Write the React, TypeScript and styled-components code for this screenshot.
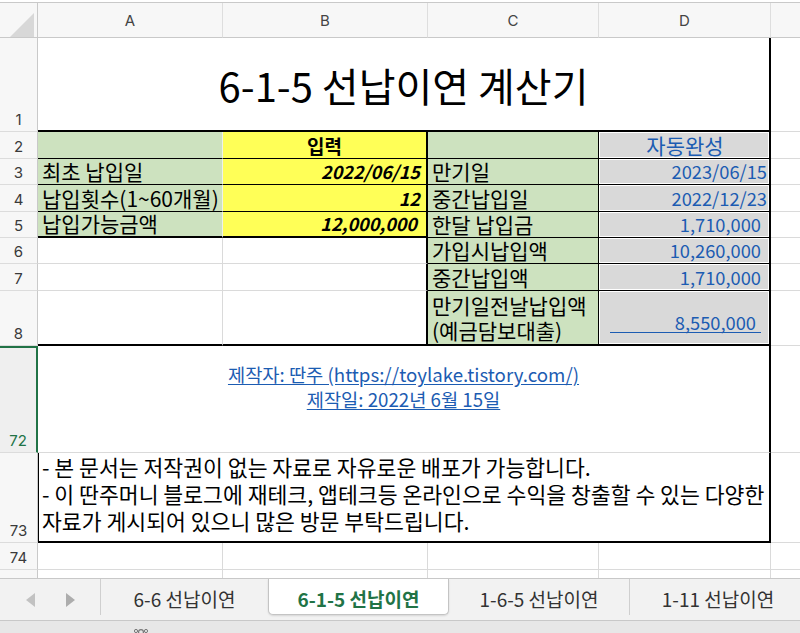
import React from "react";
import styled, { createGlobalStyle } from "styled-components";

const GRID = "#dadada";
const HEAD_LINE = "#c9c9c9";
const THIN = "1px solid #000";
const THICK = "2px solid #000";
const GREEN = "#cde2bf";
const YELLOW = "#ffff57";
const GRAY = "#d9d9d9";
const BLUE = "#1c5cb2";
const XL_GREEN = "#217346";
const KR = `"Noto Sans CJK KR", "Noto Sans", sans-serif`;
const UI = `Inter, "Noto Sans", sans-serif`;

const GlobalStyle = createGlobalStyle`
  html, body {
    margin: 0;
    padding: 0;
    background: #fff;
  }
  body {
    font-family: ${KR};
    overflow: hidden;
  }
  * {
    box-sizing: border-box;
  }
`;

const Window = styled.div`
  width: 800px;
  height: 633px;
  display: flex;
  flex-direction: column;
  overflow: hidden;
`;

const SheetArea = styled.div`
  height: 578px;
  flex: none;
  overflow: hidden;
  padding-top: 2px;
  background: #fff;
`;

const Sheet = styled.div`
  display: grid;
  grid-template-columns: 38px 185px 205px 171px 172px 29px;
  grid-template-rows: 35px 94px 27px 26px 27px 26px 26px 27px 55px 107px 90px 27px 27px;
  border-top: 1px solid ${HEAD_LINE};
`;

const Corner = styled.div`
  position: relative;
  background: #f7f7f7;
  border-right: 1px solid ${HEAD_LINE};
  border-bottom: 1px solid ${HEAD_LINE};

  &::after {
    content: "";
    position: absolute;
    left: 10px;
    top: 10px;
    width: 24px;
    height: 24px;
    background: #d8d8d8;
    clip-path: polygon(100% 0, 100% 100%, 0 100%);
  }
`;

const ColHead = styled.div<{ $last?: boolean }>`
  background: #f7f7f7;
  border-right: ${({ $last }) => ($last ? "none" : "1px solid #dedede")};
  border-bottom: 1px solid ${HEAD_LINE};
  display: flex;
  align-items: center;
  justify-content: center;
  font-family: ${UI};
  font-size: 15px;
  color: #444;
`;

const RowHead = styled.div<{ $active?: boolean }>`
  background: ${({ $active }) => ($active ? "#efefef" : "#f7f7f7")};
  border-right: ${({ $active }) => ($active ? `2px solid ${XL_GREEN}` : `1px solid ${HEAD_LINE}`)};
  border-bottom: 1px solid #dcdcdc;
  box-shadow: ${({ $active }) => ($active ? `inset 0 2px 0 ${XL_GREEN}` : "none")};
  display: flex;
  align-items: flex-end;
  justify-content: center;
  padding-bottom: 4px;
  font-family: ${UI};
  font-size: 15px;
  line-height: 1;
  overflow: hidden;
  color: ${({ $active }) => ($active ? XL_GREEN : "#3a3a3a")};
`;

type CellProps = {
  $bg?: string;
  $r?: string;
  $b?: string;
  $l?: string;
  $span?: number;
  $align?: "flex-start" | "center" | "flex-end";
  $valign?: "flex-start" | "center" | "flex-end";
  $inset?: boolean;
};

const Cell = styled.div<CellProps>`
  grid-column: span ${({ $span }) => $span ?? 1};
  background: ${({ $bg }) => $bg ?? "#fff"};
  border-right: ${({ $r }) => $r ?? `1px solid ${GRID}`};
  border-bottom: ${({ $b }) => $b ?? `1px solid ${GRID}`};
  border-left: ${({ $l }) => $l ?? "none"};
  box-shadow: ${({ $inset }) => ($inset ? "inset 0 0 0 1px #fff" : "none")};
  display: flex;
  align-items: ${({ $valign }) => $valign ?? "flex-end"};
  justify-content: ${({ $align }) => $align ?? "flex-start"};
  padding: 0 4px 1px;
  font-size: 21px;
  line-height: 23px;
  color: #000;
  white-space: nowrap;
`;

const Title = styled(Cell)`
  font-size: 40px;
  line-height: 1.2;
  padding: 2px 0 0;
`;

const InputHead = styled.span`
  font-size: 19px;
  font-weight: 700;
`;

const InputValue = styled.span<{ $pr: number }>`
  font-size: 18px;
  font-weight: 700;
  font-style: italic;
  margin-right: ${({ $pr }) => $pr}px;
`;

const AutoValue = styled.span<{ $pr?: number; $num?: boolean }>`
  color: ${BLUE};
  font-size: ${({ $num }) => ($num ? "18.3px" : "inherit")};
  margin-right: ${({ $pr }) => $pr ?? 0}px;
`;

const Underlined = styled.span`
  flex: 1;
  text-align: right;
  color: ${BLUE};
  font-size: 18.3px;
  line-height: 20px;
  padding-right: 5px;
  margin: 10px 0 0 7px;
  border-bottom: 1px solid ${BLUE};
`;

const TwoLines = styled.div`
  line-height: 25px;
`;

const Credits = styled(Cell)`
  flex-direction: column;
  padding-top: 15px;
`;

const CreditLink = styled.a`
  color: ${BLUE};
  font-size: 18.7px;
  line-height: 25px;
  text-decoration: underline;
  text-underline-offset: 2px;
`;

const Notice = styled(Cell)`
  flex-direction: column;
  align-items: flex-start;
  justify-content: flex-start;
  padding: 0 0 0 3px;
  font-size: 21.6px;
  line-height: 27px;
`;

const TabBar = styled.div`
  height: 42px;
  flex: none;
  display: flex;
  background: #f2f2f2;
  border-top: 1px solid #c8c8c8;
  overflow: hidden;
`;

const TabNav = styled.div`
  width: 101px;
  flex: none;
  display: flex;
  align-items: center;
  padding-left: 24px;
  gap: 27px;
  border-right: 1px solid #cfcfcf;
  margin-bottom: 5px;
`;

const Arrow = styled.svg<{ $light?: boolean }>`
  width: 13px;
  height: 16px;
  fill: ${({ $light }) => ($light ? "#c2c2c2" : "#adadad")};
  margin-top: 5px;
`;

const Tab = styled.div<{ $w: number; $active?: boolean; $sep?: boolean }>`
  width: ${({ $w }) => $w}px;
  flex: none;
  display: flex;
  align-items: center;
  justify-content: center;
  padding-top: 3px;
  margin-bottom: 5px;
  font-size: 19px;
  white-space: nowrap;
  color: ${({ $active }) => ($active ? XL_GREEN : "#333")};
  font-weight: ${({ $active }) => ($active ? 700 : 400)};
  background: ${({ $active }) => ($active ? "#fff" : "transparent")};
  border: ${({ $active }) => ($active ? "1px solid #c4c4c4" : "none")};
  border-top: none;
  border-right: ${({ $active, $sep }) =>
    $active ? "1px solid #c4c4c4" : $sep ? "1px solid #cfcfcf" : "none"};
  border-radius: ${({ $active }) => ($active ? "0 0 5px 5px" : "0")};
  box-shadow: ${({ $active }) => ($active ? "0 1px 2px rgba(0,0,0,0.12)" : "none")};
`;

const StatusBar = styled.div`
  flex: 1;
  background: #e7e7e7;
  border-top: 1px solid #c8c8c8;
  padding-left: 132px;
  overflow: hidden;
`;

const StatusIcon = styled.svg`
  width: 18px;
  height: 12px;
  margin-top: 6px;
  display: block;
`;

type Row = {
  n: number;
  a?: string;
  b?: React.ReactNode;
  c?: React.ReactNode;
  d?: React.ReactNode;
};

const rows: Row[] = [
  { n: 2, b: <InputHead>입력</InputHead>, d: <AutoValue>자동완성</AutoValue> },
  {
    n: 3,
    a: "최초 납입일",
    b: <InputValue $pr={2}>2022/06/15</InputValue>,
    c: "만기일",
    d: <AutoValue $num>2023/06/15</AutoValue>,
  },
  {
    n: 4,
    a: "납입횟수(1~60개월)",
    b: <InputValue $pr={2}>12</InputValue>,
    c: "중간납입일",
    d: <AutoValue $num>2022/12/23</AutoValue>,
  },
  {
    n: 5,
    a: "납입가능금액",
    b: <InputValue $pr={5}>12,000,000</InputValue>,
    c: "한달 납입금",
    d: (
      <AutoValue $num $pr={6}>
        1,710,000
      </AutoValue>
    ),
  },
  {
    n: 6,
    c: "가입시납입액",
    d: (
      <AutoValue $num $pr={6}>
        10,260,000
      </AutoValue>
    ),
  },
  {
    n: 7,
    c: "중간납입액",
    d: (
      <AutoValue $num $pr={6}>
        1,710,000
      </AutoValue>
    ),
  },
  {
    n: 8,
    c: (
      <TwoLines>
        만기일전날납입액
        <br />
        (예금담보대출)
      </TwoLines>
    ),
    d: <Underlined>8,550,000</Underlined>,
  },
];

const lowerBorder = (n: number) => (n <= 4 ? THIN : n === 5 || n === 8 ? THICK : undefined);

const App = () => {
  return (
    <Window>
      <GlobalStyle />
      <SheetArea>
        <Sheet>
          <Corner />
          <ColHead>A</ColHead>
          <ColHead>B</ColHead>
          <ColHead>C</ColHead>
          <ColHead>D</ColHead>
          <ColHead $last />

          <RowHead>1</RowHead>
          <Title $span={4} $r={THICK} $b={THICK} $align="center" $valign="center">
            6-1-5 선납이연 계산기
          </Title>
          <Cell $r="none" />

          {rows.map((row) => (
            <React.Fragment key={row.n}>
              <RowHead>{row.n}</RowHead>
              <Cell
                $bg={row.n <= 5 ? GREEN : undefined}
                $r={row.n <= 5 ? "1px solid #eef2ea" : undefined}
                $b={lowerBorder(row.n)}
              >
                {row.a}
              </Cell>
              <Cell
                $bg={row.n <= 5 ? YELLOW : undefined}
                $r={THICK}
                $b={lowerBorder(row.n)}
                $align={row.n === 2 ? "center" : "flex-end"}
              >
                {row.b}
              </Cell>
              <Cell $bg={GREEN} $r={THIN} $b={row.n === 8 ? THICK : THIN}>
                {row.c}
              </Cell>
              <Cell
                $bg={GRAY}
                $r={THICK}
                $b={row.n === 8 ? THICK : THIN}
                $inset
                $align={row.n === 2 ? "center" : "flex-end"}
                $valign={row.n === 8 ? "center" : "flex-end"}
                style={{ paddingRight: row.n === 8 ? 8 : 2 }}
              >
                {row.d}
              </Cell>
              <Cell $r="none" />
            </React.Fragment>
          ))}

          <RowHead $active>72</RowHead>
          <Credits $span={4} $r={THICK} $align="flex-start" $valign="center">
            <CreditLink href="#">제작자: 딴주 (https://toylake.tistory.com/)</CreditLink>
            <CreditLink href="#">제작일: 2022년 6월 15일</CreditLink>
          </Credits>
          <Cell $r="none" />

          <RowHead>73</RowHead>
          <Notice $span={4} $l={THIN} $r={THICK} $b={THICK}>
            <span>- 본 문서는 저작권이 없는 자료로 자유로운 배포가 가능합니다.</span>
            <span>- 이 딴주머니 블로그에 재테크, 앱테크등 온라인으로 수익을 창출할 수 있는 다양한</span>
            <span>자료가 게시되어 있으니 많은 방문 부탁드립니다.</span>
          </Notice>
          <Cell $r="none" />

          {[74, 75].map((n) => (
            <React.Fragment key={n}>
              <RowHead>{n}</RowHead>
              <Cell />
              <Cell />
              <Cell />
              <Cell />
              <Cell $r="none" />
            </React.Fragment>
          ))}
        </Sheet>
      </SheetArea>

      <TabBar>
        <TabNav>
          <Arrow $light viewBox="0 0 13 16">
            <path d="M11 1 L2 8 L11 15 Z" />
          </Arrow>
          <Arrow viewBox="0 0 13 16">
            <path d="M2 1 L11 8 L2 15 Z" />
          </Arrow>
        </TabNav>
        <Tab $w={167}>6-6 선납이연</Tab>
        <Tab $w={181} $active>
          6-1-5 선납이연
        </Tab>
        <Tab $w={181} $sep>
          1-6-5 선납이연
        </Tab>
        <Tab $w={176}>1-11 선납이연</Tab>
      </TabBar>
      <StatusBar>
        <StatusIcon viewBox="0 0 18 12">
          <circle cx="4" cy="4" r="1.6" fill="none" stroke="#777" strokeWidth="1" />
          <circle cx="9" cy="5" r="2.4" fill="none" stroke="#777" strokeWidth="1.2" />
          <circle cx="14" cy="4" r="1.6" fill="none" stroke="#777" strokeWidth="1" />
        </StatusIcon>
      </StatusBar>
    </Window>
  );
};

export default App;
